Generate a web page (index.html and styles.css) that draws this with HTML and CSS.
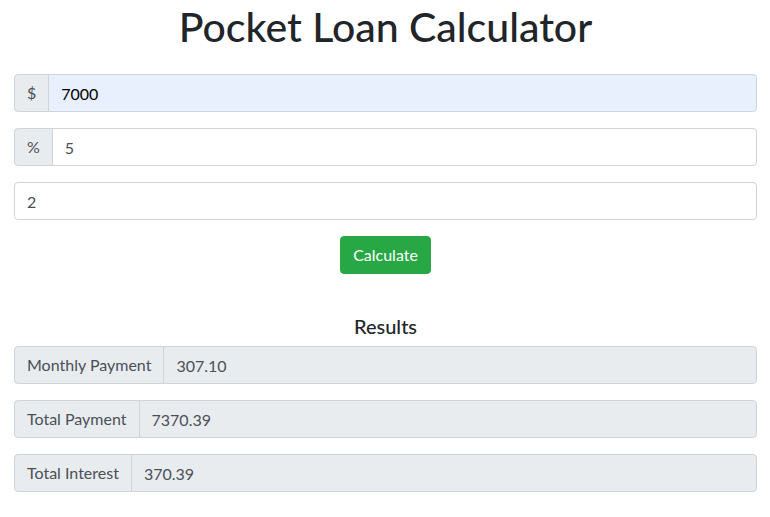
FILE: index.html
```html
<!DOCTYPE html>
<html lang="en">
<head>
<meta charset="utf-8">
<title>Pocket Loan Calculator</title>
<link rel="stylesheet" href="styles.css">
</head>
<body>
<div class="container">
  <h1 class="title">Pocket Loan Calculator</h1>
  <form class="loan-form">
    <div class="input-group">
      <span class="addon">$</span>
      <input class="field autofill" type="text" value="7000">
    </div>
    <div class="input-group">
      <span class="addon">%</span>
      <input class="field" type="text" value="5">
    </div>
    <div class="input-group">
      <input class="field solo" type="text" value="2">
    </div>
    <div class="actions">
      <button class="btn-success" type="button">Calculate</button>
    </div>
  </form>
  <div class="results">
    <h5 class="results-title">Results</h5>
    <div class="input-group">
      <span class="addon">Monthly Payment</span>
      <input class="field readonly" type="text" value="307.10" readonly>
    </div>
    <div class="input-group">
      <span class="addon">Total Payment</span>
      <input class="field readonly" type="text" value="7370.39" readonly>
    </div>
    <div class="input-group">
      <span class="addon">Total Interest</span>
      <input class="field readonly" type="text" value="370.39" readonly>
    </div>
  </div>
</div>
</body>
</html>
```
FILE: styles.css
```css
* { box-sizing: border-box; }
html, body {
  margin: 0;
  padding: 0;
  background: #fff;
  font-family: Lato, "Liberation Sans", sans-serif;
  font-size: 16px;
  line-height: 1.5;
  color: #212529;
}
.container {
  padding: 0 13px 0 14px;
}
.title {
  margin: 3px 0 23px;
  font-size: 41px;
  line-height: 48px;
  font-weight: 500;
  text-align: center;
  color: #212529;
}
.loan-form { margin: 0; }
.input-group {
  display: flex;
  align-items: stretch;
  width: 100%;
  height: 38px;
  margin-bottom: 16px;
}
.addon {
  display: flex;
  align-items: center;
  padding: 6px 12px;
  font-size: 16px;
  line-height: 24px;
  color: #495057;
  background: #e9ecef;
  border: 1px solid #ced4da;
  border-radius: 4px 0 0 4px;
  white-space: nowrap;
}
.field {
  flex: 1 1 auto;
  min-width: 0;
  height: 38px;
  margin-left: -1px;
  padding: 6px 12px;
  font-family: inherit;
  font-size: 16px;
  line-height: 24px;
  color: #495057;
  background: #fff;
  border: 1px solid #ced4da;
  border-radius: 0 4px 4px 0;
  outline: none;
}
.field.solo {
  margin-left: 0;
  border-radius: 4px;
}
.field.autofill {
  background: #e8f0fe;
  color: #000;
}
.field.readonly {
  background: #e9ecef;
}
.actions {
  display: flex;
  justify-content: center;
  margin-bottom: 40px;
}
.btn-success {
  height: 38px;
  padding: 6px 12px;
  font-family: inherit;
  font-size: 16px;
  line-height: 24px;
  color: #fff;
  background: #28a745;
  border: 1px solid #28a745;
  border-radius: 4px;
  cursor: pointer;
}
.results-title {
  margin: 0 0 8px;
  font-size: 20px;
  line-height: 24px;
  font-weight: 500;
  text-align: center;
  color: #212529;
}
```
